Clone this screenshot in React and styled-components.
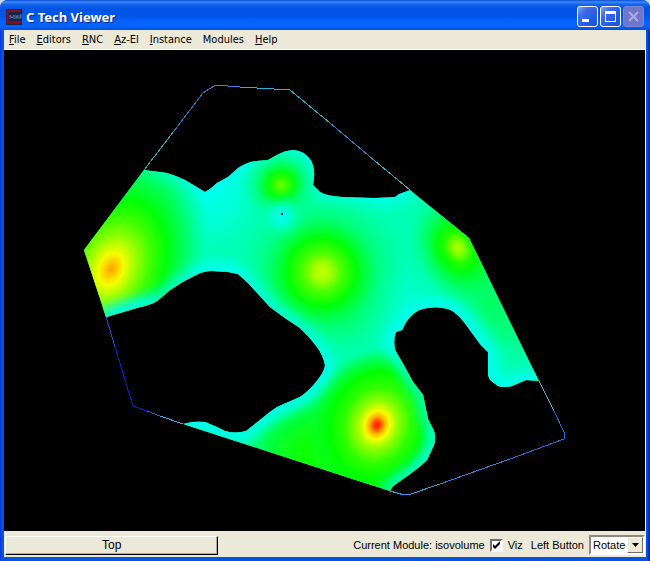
import React, { useState } from "react";
import styled, { createGlobalStyle } from "styled-components";

const GlobalStyle = createGlobalStyle`
  * { box-sizing: border-box; }
  body {
    margin: 0;
    background: #c9d6ee;
    color: #000;
    font-family: "Liberation Sans", Arial, sans-serif;
    font-size: 11px;
    line-height: 14px;
  }
`;

const Window = styled.div`
  display: flex;
  flex-direction: column;
  min-height: 100vh;
  overflow: hidden;
  border-radius: 8px 8px 0 0;
  background: linear-gradient(90deg, #0831d9 0, #0855dd 2px, #0855dd calc(100% - 3px), #0018a0 100%);
`;

const TitleBar = styled.header`
  display: flex;
  align-items: center;
  gap: 4px;
  height: 30px;
  padding: 3px 6px 0 6px;
  background: linear-gradient(
    180deg,
    #0a4ad0 0, #3c8cff 2px, #1668ee 4px, #0054e3 8px,
    #0055e5 16px, #0562fb 22px, #0464ff 26px, #0050d8 30px
  );
`;

const Title = styled.h1`
  flex: 1;
  margin: 0;
  color: #fff;
  font: bold 13px/16px "Noto Sans", sans-serif;
  text-shadow: 1px 1px 0 #0a2a8c;
`;

const Logo = styled.svg`
  display: block;
  width: 16px;
  height: 16px;
`;

const CaptionButtons = styled.div`
  display: flex;
  gap: 2px;
`;

const CaptionButton = styled.button`
  display: block;
  width: 21px;
  height: 21px;
  padding: 0;
  border: 1px solid ${(p) => (p.disabled ? "#7d86d4" : "#fff")};
  border-radius: 3px;
  background: ${(p) =>
    p.disabled
      ? "#6f76cb"
      : "linear-gradient(135deg, #7ea3f5 0, #3a6cec 30%, #2459e6 70%, #1c4fd0 100%)"};

  svg { display: block; width: 19px; height: 19px; }
`;

const Body = styled.main`
  flex: 1;
  display: flex;
  flex-direction: column;
  margin: 0 4px 4px;
  background: #ece9d8;
`;

const MenuBar = styled.nav`
  display: flex;
  gap: 11px;
  height: 20px;
  padding: 0 5px;
  border-bottom: 1px solid #fff;
`;

const MenuItem = styled.button`
  padding: 0;
  border: 0;
  background: none;
  color: #000;
  font: 11px/18px "DejaVu Sans Condensed", "DejaVu Sans", sans-serif;

  u { text-underline-offset: 1px; text-decoration-thickness: 1px; }
`;

const Viewport = styled.section`
  flex: 1;
  display: flex;
  background: #000;
  margin-right: 1px;
`;

const Plot = styled.svg`
  display: block;
  flex: 1;
  width: 100%;
  min-width: 0;
`;

const StatusBar = styled.footer`
  display: grid;
  grid-template-columns: 1fr 2fr;
  align-items: center;
  height: 26px;
  padding: 2px 1px 0;
`;

const TopButton = styled.button`
  height: 19px;
  padding: 0;
  border: 1px solid;
  border-color: #fff #000 #000 #fff;
  box-shadow: inset -1px -1px 0 #aca899;
  background: #ece9d8;
  color: #000;
  font: 12px/16px "Liberation Sans", Arial, sans-serif;
`;

const Controls = styled.div`
  display: flex;
  align-items: center;
  justify-content: flex-end;
  gap: 5px;
`;

const VizLabel = styled.label`
  display: flex;
  align-items: center;
  gap: 5px;
  margin-right: 3px;
`;

const Check = styled.input`
  appearance: none;
  width: 13px;
  height: 13px;
  margin: 0;
  border: 2px solid;
  border-color: #716f64 #fff #fff #716f64;
  background: #fff;
`;

const CheckBox = styled.span`
  display: grid;
  & > * { grid-area: 1 / 1; }
`;

const Tick = styled.svg`
  width: 13px;
  height: 13px;
  pointer-events: none;
`;

const SelectBox = styled.span`
  display: grid;
  width: 56px;
  height: 20px;
  border: 2px solid;
  border-color: #8c897c #fff #fff #8c897c;
  background: #fff;
  & > * { grid-area: 1 / 1; }
`;

const Select = styled.select`
  appearance: none;
  width: 100%;
  padding: 0 0 0 2px;
  border: 0;
  border-radius: 0;
  background: #fff;
  color: #000;
  font: 11px/16px "Liberation Sans", Arial, sans-serif;
`;

const DropArrow = styled.span`
  justify-self: end;
  display: grid;
  place-items: center;
  width: 16px;
  border: 1px solid;
  border-color: #fff #716f64 #716f64 #fff;
  background: #ece9d8;
  pointer-events: none;
`;

const MENUS = ["File", "Editors", "RNC", "Az-El", "Instance", "Modules", "Help"];

const NORTH =
  "L167 173 Q177 176 185 180 L200 189 L205 192 L210 189 L217 183 L228 177 L238 168 Q247 162 256 161 L268 160 L275 156 Q285 150 294 150 Q304 151 310 159 Q315 166 314 178 L313 185 L320 192 Q326 196 342 197 L375 198 L395 197 L399 194 L410 190";
const EAST =
  "L526 380 L512 386 Q503 388 498 386 L490 380 L488 375 L488 352 L480 344 L464 322 Q455 311 448 309 Q433 305 419 310 Q410 315 405 324 L402 330 L396 332 Q393 339 395 350 L402 362 L413 382 L423 395 L428 419 L434 431 Q436 438 434 445 L427 460 Q420 467 410 474 L393 486 L390 491";
const WEST =
  "L187 423 Q195 421 205 422 Q213 425 225 431 Q235 434 246 431 L260 420 Q268 413 277 407 L300 397 Q309 391 316 382 Q325 371 325 365 Q323 355 317 347 Q310 337 300 328 L285 318 L270 307 L260 296 L248 283 L238 274 L228 272 L212 271 Q203 271 196 275 Q183 281 170 290 L157 301 Q150 305 140 307 L106 317";

const FIELD = `M144 170 ${NORTH} L469 238 L539 381 ${EAST} L183 424 ${WEST} L84 250 Z`;

const OUTLINE = [
  ["M144 170 L174 131", "#28b4c0"],
  ["M174 131 L203 93 L209 89", "#2878cc"],
  ["M209 89 L216 85 L240 87", "#2e82e8"],
  ["M240 87 L290 90 L330 123", "#22b4dc"],
  ["M330 123 L375 161", "#2e86cc"],
  ["M375 161 L410 190", "#30b4d4"],
  ["M539 381 L554 411", "#40b8d8"],
  ["M554 411 L564 432 L564 439 L510 459", "#286cdc"],
  ["M510 459 L440 484", "#2c88d8"],
  ["M440 484 L411 494 L404 495 L390 491", "#35a0e8"],
  ["M106 317 L115 347", "#1c50d8"],
  ["M115 347 L133 406 L147 411", "#1818c8"],
  ["M147 411 L160 416", "#2060e0"],
  ["M160 416 L183 424", "#38a8f0"],
];

const GLOWS = [
  { id: "left", cx: 111, cy: 269, stops: [[0, "#ffa000"], [0.05, "#ffc400"], [0.13, "#f4ff00"], [0.24, "#a0ff00"], [0.4, "#40ff00"], [0.56, "#00ff08"], [0.78, "#00ff58", 0.7], [1, "#00ffa0", 0]], r: 112, t: "translate(111 269) rotate(24) scale(.82 1.15) translate(-111 -269)" },
  { id: "small", cx: 281, cy: 185, stops: [[0, "#70ff00"], [0.14, "#38ff00"], [0.32, "#00ff10"], [0.6, "#00ff60", 0.6], [1, "#00ffa0", 0]], r: 42 },
  { id: "middle", cx: 322, cy: 272, stops: [[0, "#c8ff00"], [0.1, "#a0ff00"], [0.22, "#48ff00"], [0.38, "#00ff08"], [0.62, "#00ff60", 0.65], [1, "#00ffa0", 0]], r: 90 },
  { id: "right", cx: 458, cy: 248, stops: [[0, "#b8ff00"], [0.1, "#88ff00"], [0.26, "#20ff00"], [0.4, "#00ff10"], [0.68, "#00ff58", 0.6], [1, "#00ffa0", 0]], r: 54, t: "translate(458 248) rotate(-28) scale(.9 1.15) translate(-458 -248)" },
  { id: "hot", cx: 377, cy: 425, stops: [[0, "#ff1800"], [0.05, "#ff4800"], [0.11, "#ffb000"], [0.18, "#f4ff00"], [0.3, "#90ff00"], [0.48, "#30ff00"], [0.68, "#00ff00"], [0.84, "#00ff20", 0.6], [1, "#00ff60", 0]], r: 74, t: "translate(377 425) rotate(18) scale(.92 1.08) translate(-377 -425)" },
];

function ContourPlot() {
  return (
    <Plot viewBox="4 50 641 481" role="img" aria-label="Isovolume, top view">
      <defs>
        <clipPath id="field"><path d={FIELD} /></clipPath>
        <filter id="soft" filterUnits="userSpaceOnUse" x="0" y="0" width="650" height="561"><feGaussianBlur stdDeviation="7" /></filter>
        <filter id="wide" filterUnits="userSpaceOnUse" x="0" y="0" width="650" height="561"><feGaussianBlur stdDeviation="15" /></filter>
        {GLOWS.map((g) => (
          <radialGradient key={g.id} id={g.id}>
            {g.stops.map(([o, c, a = 1]) => (
              <stop key={o} offset={o} stopColor={c} stopOpacity={a} />
            ))}
          </radialGradient>
        ))}
      </defs>
      <g clipPath="url(#field)">
        <rect x="80" y="140" width="470" height="360" fill="#00ffb4" />
        <g filter="url(#wide)">
          <path d="M80 250 L144 170 L168 190 L178 250 L150 295 L105 300 Z" fill="#00ff50" />
          <path d="M250 424 L300 400 L340 375 L400 385 L415 440 L385 490 L250 452 Z" fill="#00ff40" />
          <path d="M440 240 L470 230 L530 350 L505 340 L455 280 Z" fill="#00ff38" />
          <path d="M290 250 L350 280 L365 335 L335 330 Z" fill="#00ff70" />
          <path d="M190 175 L260 175 L230 225 L200 240 Z" fill="#00ffe8" />
          <path d="M385 270 L425 290 L400 320 L385 320 Z" fill="#00ffe0" />
        </g>
        <g fill="none" stroke="#00fff0" strokeWidth="15" filter="url(#soft)">
          <path d={`M144 170 ${NORTH}`} />
          <path d={`M539 381 ${EAST}`} />
          <path d={`M183 424 ${WEST}`} />
        </g>
        <path d="M262 470 L284 436 L330 412 L372 425 L388 455 L370 510 Z" fill="#08ff00" filter="url(#wide)" />
        {GLOWS.map((g) => (
          <circle key={g.id} cx={g.cx} cy={g.cy} r={g.r} transform={g.t} fill={`url(#${g.id})`} />
        ))}
        <g fill="none" stroke="#00ffe8" strokeWidth="11" filter="url(#soft)">
          <path d={`M183 424 ${WEST}`} />
          <path d={`M539 381 ${EAST}`} />
          <path d={`M539 381 ${EAST}`} />
        </g>
        <path d="M100 321 L106 319 L140 309 L157 303" fill="none" stroke="#00fff0" strokeWidth="16" filter="url(#soft)" />
        <circle cx="282" cy="216" r="12" fill="#00ffff" filter="url(#soft)" />
        <rect x="281" y="213" width="2" height="2" fill="#001830" />
      </g>
      <g fill="none" strokeWidth="1">
        {OUTLINE.map(([d, color]) => (
          <path key={d} d={d} stroke={color} shapeRendering="crispEdges" />
        ))}
      </g>
    </Plot>
  );
}

export default function App() {
  const [viz, setViz] = useState(true);
  return (
    <>
      <GlobalStyle />
      <Window>
        <TitleBar>
          <Logo viewBox="0 0 16 16" aria-hidden="true">
            <rect width="16" height="16" fill="#16254c" />
            <path d="M15 2 H1.5 V13.5 H15" fill="none" stroke="#8c1024" strokeWidth="2" />
            <path d="M4 10 V6 L6 9 L8 6 V10 M10 6 V10 M10 8 H12 M12 6 V10 M14 10 V6 H16 M14 8 H16" fill="none" stroke="#5878a0" />
          </Logo>
          <Title>C Tech Viewer</Title>
          <CaptionButtons>
            <CaptionButton aria-label="Minimize">
              <svg viewBox="0 0 19 19"><rect x="4" y="12" width="7" height="3" fill="#fff" /></svg>
            </CaptionButton>
            <CaptionButton aria-label="Maximize">
              <svg viewBox="0 0 19 19"><path d="M4 4h11v11H4z M5 7v7h9V7z" fill="#fff" fillRule="evenodd" /></svg>
            </CaptionButton>
            <CaptionButton aria-label="Close" disabled>
              <svg viewBox="0 0 19 19"><path d="M5 5l9 9M14 5l-9 9" stroke="#a9aee2" strokeWidth="2" /></svg>
            </CaptionButton>
          </CaptionButtons>
        </TitleBar>
        <Body>
          <MenuBar>
            {MENUS.map((name) => (
              <MenuItem key={name}>
                {name === "Modules" ? name : <><u>{name[0]}</u>{name.slice(1)}</>}
              </MenuItem>
            ))}
          </MenuBar>
          <Viewport><ContourPlot /></Viewport>
          <StatusBar>
            <TopButton>Top</TopButton>
            <Controls>
              <span>Current Module: isovolume</span>
              <VizLabel>
                <CheckBox>
                  <Check type="checkbox" checked={viz} onChange={(e) => setViz(e.target.checked)} />
                  {viz && (
                    <Tick viewBox="0 0 13 13" aria-hidden="true">
                      <path d="M3 5v3l2 2 5-5V2L5 7z" fill="#000" />
                    </Tick>
                  )}
                </CheckBox>
                Viz
              </VizLabel>
              <label htmlFor="left-button">Left Button</label>
              <SelectBox>
                <Select id="left-button" defaultValue="Rotate">
                  <option>Rotate</option>
                </Select>
                <DropArrow>
                  <svg width="7" height="4" viewBox="0 0 7 4" aria-hidden="true"><path d="M0 0h7L3.5 4z" /></svg>
                </DropArrow>
              </SelectBox>
            </Controls>
          </StatusBar>
        </Body>
      </Window>
    </>
  );
}
